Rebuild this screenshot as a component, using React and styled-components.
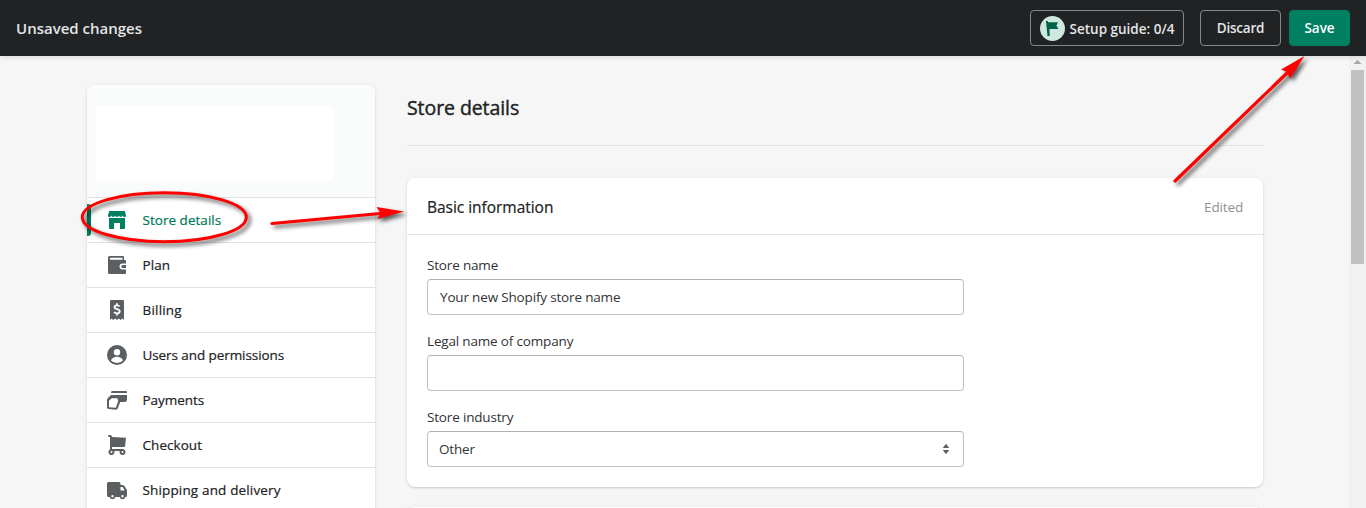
import React from "react";
import styled, { createGlobalStyle } from "styled-components";

const GlobalStyle = createGlobalStyle`
  * { box-sizing: border-box; }
  body {
    margin: 0;
    overflow: hidden;
    background: #f6f6f6;
    color: #202223;
    font-family: "Open Sans", "Noto Sans", sans-serif;
    font-size: 14px;
    line-height: 20px;
  }
`;

const Page = styled.div`
  position: relative;
  display: flex;
  flex-direction: column;
  height: 508px;
  overflow: hidden;
`;

const TopBar = styled.header`
  display: flex;
  align-items: center;
  flex: none;
  height: 56px;
  padding: 0 16px;
  background: #202223;
  box-shadow: 0 2px 4px rgba(0, 0, 0, 0.1);
  z-index: 1;
`;

const BarTitle = styled.div`
  flex: 1;
  color: #e3e5e7;
  font-size: 15px;
  font-weight: 600;
`;

const BarButton = styled.button`
  display: flex;
  align-items: center;
  justify-content: center;
  gap: 5px;
  width: ${(p) => p.$width}px;
  height: 36px;
  margin: 0 0 0 ${(p) => p.$gap || 0}px;
  padding: 0;
  border: 1px solid ${(p) => (p.$primary ? "#008060" : "#84878a")};
  border-radius: 4px;
  background: ${(p) => (p.$primary ? "#008060" : "transparent")};
  color: ${(p) => (p.$primary ? "#fff" : "#e3e5e7")};
  font: 600 13.5px/20px "Open Sans", "Noto Sans", sans-serif;
  letter-spacing: ${(p) => p.$track || 0}px;
  white-space: nowrap;
`;

const ButtonText = styled.span`
  padding-top: ${(p) => p.$drop || 0}px;
`;

const Body = styled.div`
  display: flex;
  flex: 1;
  min-height: 0;
`;

const Content = styled.main`
  display: flex;
  align-items: flex-start;
  gap: 32px;
  flex: 1;
  padding: 29px 0 0 87px;
`;

const Panel = styled.section`
  background: #fff;
  border-radius: 8px;
  box-shadow: 0 0 5px rgba(23, 24, 24, 0.05), 0 1px 2px rgba(0, 0, 0, 0.15);
`;

const Sidebar = styled(Panel)`
  width: 288px;
  padding-bottom: 16px;
  overflow: hidden;
`;

const Account = styled.div`
  height: 112px;
  padding: 21px 9px;
  background: #fafcfb;
`;

const AccountBlank = styled.div`
  width: 237px;
  height: 74px;
  background: #fff;
`;

const NavItem = styled.a`
  position: relative;
  display: flex;
  align-items: center;
  gap: 15.5px;
  height: 45px;
  padding-left: 20px;
  border-top: 1px solid #e1e3e5;
  color: ${(p) => (p.$active ? "#007a5c" : "#202223")};
  font-size: 13.5px;
  font-weight: 500;
  letter-spacing: ${(p) => p.$track}px;
  -webkit-text-stroke: 0.2px currentColor;
  svg {
    fill: ${(p) => (p.$active ? "#008060" : "#5c5f62")};
    -webkit-text-stroke: 0;
  }
`;

const ActiveMark = styled.span`
  position: absolute;
  left: 0;
  top: 6px;
  width: 4px;
  height: 32px;
  border-radius: 0 3px 3px 0;
  background: #008060;
`;

const Column = styled.div`
  display: flex;
  flex-direction: column;
  width: 856px;
`;

const PageTitle = styled.h1`
  height: 61px;
  margin: 0 0 32px;
  padding-top: 9px;
  border-bottom: 1px solid #e1e3e5;
  font-size: 19.5px;
  font-weight: 500;
  line-height: 28px;
  letter-spacing: -0.08px;
  -webkit-text-stroke: 0.4px currentColor;
`;

const Card = styled(Panel)`
  height: 309px;
  margin-bottom: 20px;
  flex: none;
`;

const CardHeader = styled.div`
  display: flex;
  align-items: center;
  justify-content: space-between;
  height: 57px;
  padding: 1px 20px 0;
  border-bottom: 1px solid #e1e3e5;
`;

const CardTitle = styled.h2`
  margin: 0;
  font-size: 15.5px;
  font-weight: 500;
  line-height: 20px;
  letter-spacing: -0.03px;
  -webkit-text-stroke: 0.2px currentColor;
`;

const Badge = styled.span`
  color: #8c9196;
  font-size: 13.5px;
  letter-spacing: -0.15px;
`;

const Form = styled.div`
  display: flex;
  flex-direction: column;
  gap: 16px;
  width: 577px;
  padding: 20px 20px 0;
  font-size: 13.5px;
  letter-spacing: -0.17px;
`;

const Field = styled.label`
  display: flex;
  flex-direction: column;
  gap: 4px;
  color: #303335;
`;

const Control = styled.div`
  display: flex;
  align-items: center;
  justify-content: space-between;
  height: 36px;
  padding: 0 12px 0 ${(p) => p.$inset || 12}px;
  border: 1px solid #c0c4c8;
  border-top-color: #aeb2b6;
  border-radius: 4px;
  background: #fff;
`;

const NextCard = styled(Panel)`
  height: 60px;
`;

const ScrollTrack = styled.div`
  display: flex;
  flex-direction: column;
  align-items: center;
  width: 17px;
  background: #f1f1f1;
`;

const ScrollThumb = styled.div`
  width: 13px;
  height: 194px;
  background: #c1c1c1;
`;

const Markup = styled.svg`
  position: absolute;
  inset: 0;
  z-index: 2;
  pointer-events: none;
  filter: drop-shadow(3px 3px 2px rgba(0, 0, 0, 0.65));
`;

const icons = {
  store: (
    <>
      <path d="M2.200 1h15.600l1.200 4.400c0 1-.7 1.600-1.600 1.600s-1.700-.6-1.700-1.400c0 .8-.9 1.400-1.900 1.400S12 6.400 12 5.600C12 6.400 11 7 10 7S8 6.400 8 5.600C8 6.400 7.200 7 6.200 7S4.300 6.400 4.300 5.600C4.300 6.400 3.500 7 2.600 7S1 6.400 1 5.400z" />
      <path d="M2 8h16v10a1 1 0 0 1-1 1h-4v-6H7v6H3a1 1 0 0 1-1-1z" />
    </>
  ),
  plan: (
    <path
      fillRule="evenodd"
      d="M2.500 1H16a1 1 0 0 1 1 1v3h1a1 1 0 0 1 1 1v2.500h-3.500a3 3 0 0 0 0 6H19V18a1 1 0 0 1-1 1H2.500A1.500 1.500 0 0 1 1 17.500v-15A1.500 1.500 0 0 1 2.500 1zM3.700 2.700a1 1 0 0 0 0 2H15.500v-2zM15.800 10H19v3h-3.200a1.500 1.500 0 0 1 0-3z"
    />
  ),
  billing: (
    <>
      <path d="M3 1a1 1 0 0 1 1-1h12a1 1 0 0 1 1 1v19l-1.500-1.500L13.700 20l-1.900-1.500L10 20l-1.800-1.500L6.300 20l-1.800-1.500L3 20z" />
      <path
        d="M12.600 6.600C12 5.700 11.200 5.300 10 5.300c-1.500 0-2.500.7-2.500 1.900 0 2.700 5.200 1.200 5.200 4.100 0 1.300-1.100 2.100-2.700 2.100-1.300 0-2.300-.5-2.800-1.500M10 3.300v2M10 13.400v2"
        style={{ fill: "none" }}
        stroke="#fff"
        strokeWidth="1.800"
      />
    </>
  ),
  users: (
    <path
      fillRule="evenodd"
      d="M10 0a10 10 0 1 0 0 20 10 10 0 0 0 0-20zm0 4a3.200 3.200 0 1 1 0 6.400A3.200 3.200 0 0 1 10 4zm0 14a8 8 0 0 1-6.100-2.800C5.100 13 7.400 11.800 10 11.800s4.900 1.200 6.100 3.400A8 8 0 0 1 10 18z"
    />
  ),
  payments: (
    <>
      <path d="M5.500 1H19a1 1 0 0 1 1 1v1H4v-.5C4 1.600 4.600 1 5.500 1z" />
      <path
        fillRule="evenodd"
        d="M4 5h16v4.500c0 1.500-.9 2.500-2.400 2.500h-4.400l-2.500 6.600c-.3.800-1 1.200-1.800 1.100l-7.200-.6C.7 19 0 18.300 0 17.300V10c0-.8.3-1.500.9-2zM4.800 8.200 2.400 10.200c-.3.200-.4.500-.4.800v6.200l6.800.6L11.200 11l-.9-2.800z"
      />
    </>
  ),
  checkout: (
    <path
      fillRule="evenodd"
      d="M1 1a1 1 0 0 1 1-1h1a2 2 0 0 1 2 2l14 .8-.9 8.400a1 1 0 0 1-1 .8H5v2h10.500a3 3 0 1 1-2.800 2H7.300A3 3 0 1 1 3 14.400V2H2a1 1 0 0 1-1-1zm3.500 15a1 1 0 1 0 0 2 1 1 0 0 0 0-2zm11 0a1 1 0 1 0 0 2 1 1 0 0 0 0-2z"
    />
  ),
  shipping: (
    <path
      fillRule="evenodd"
      d="M1.500 2H12a1.500 1.500 0 0 1 1.500 1.500V5h2c.8 0 1.500.4 1.900 1l2.200 3.600c.3.400.4.900.4 1.400v4.500a1.500 1.500 0 0 1-1.500 1.500h-.1a3 3 0 0 1-5.800 0H8.400a3 3 0 0 1-5.800 0H1.500A1.500 1.500 0 0 1 0 15.500v-12A1.500 1.500 0 0 1 1.500 2zm12 5v3.500h4.200L15.600 7zM5.500 15a1.200 1.200 0 1 0 0 2.400 1.200 1.200 0 0 0 0-2.400zm10 0a1.200 1.200 0 1 0 0 2.400 1.200 1.200 0 0 0 0-2.400z"
    />
  ),
};

const navigation = [
  ["store", "Store details", 0.03],
  ["plan", "Plan", 0.05],
  ["billing", "Billing", 0.2],
  ["users", "Users and permissions", -0.08],
  ["payments", "Payments", -0.03],
  ["checkout", "Checkout", 0.05],
  ["shipping", "Shipping and delivery", 0.15],
];

export default function App() {
  return (
    <Page>
      <GlobalStyle />
      <TopBar>
        <BarTitle>Unsaved changes</BarTitle>
        <BarButton $width={154}>
          <svg width="25" height="25" viewBox="0 0 25 25">
            <circle cx="12.500" cy="12.500" r="12.500" fill="#cfe8df" />
            <path d="M6 5h1.800l.3 1.200H18l-1.600 3.300 2 3.500h-9L9.800 20H7.500z" fill="#006048" />
          </svg>
          <ButtonText $drop={2}>Setup guide: 0/4</ButtonText>
        </BarButton>
        <BarButton $width={81} $gap={16} $track={-0.2}>Discard</BarButton>
        <BarButton $width={61} $gap={8} $primary>Save</BarButton>
      </TopBar>
      <Body>
        <Content>
          <Sidebar as="nav">
            <Account>
              <AccountBlank />
            </Account>
            {navigation.map(([icon, label, track], i) => (
              <NavItem key={label} $active={i === 0} $track={track}>
                {i === 0 && <ActiveMark />}
                <svg width="20" height="20" viewBox="0 0 20 20">{icons[icon]}</svg>
                <span>{label}</span>
              </NavItem>
            ))}
          </Sidebar>
          <Column>
            <PageTitle>Store details</PageTitle>
            <Card>
              <CardHeader>
                <CardTitle>Basic information</CardTitle>
                <Badge>Edited</Badge>
              </CardHeader>
              <Form>
                <Field>
                  <span>Store name</span>
                  <Control>Your new Shopify store name</Control>
                </Field>
                <Field>
                  <span>Legal name of company</span>
                  <Control />
                </Field>
                <Field>
                  <span>Store industry</span>
                  <Control $inset={11}>
                    <span>Other</span>
                    <svg width="10" height="10" viewBox="0 0 10 10" fill="#5c5f62">
                      <path d="M1.800 4h6.400L5.600.4a.8.8 0 0 0-1.200 0zM1.800 6h6.400L5.600 9.600a.8.8 0 0 1-1.200 0z" />
                    </svg>
                  </Control>
                </Field>
              </Form>
            </Card>
            <NextCard />
          </Column>
        </Content>
        <ScrollTrack>
          <svg width="17" height="14" viewBox="0 0 17 14">
            <path d="M4.500 8 8.500 4l4 4z" fill="#a3a3a3" />
          </svg>
          <ScrollThumb />
        </ScrollTrack>
      </Body>
      <Markup width="1366" height="508" viewBox="0 0 1366 508">
        <ellipse cx="164.300" cy="217.200" rx="82" ry="24.500" fill="none" stroke="#f00" strokeWidth="3" />
        <path d="M272 223.500 380 213.500M1175 181l112-108" stroke="#f00" strokeWidth="3.200" strokeLinecap="round" />
        <path d="M404 211.500 376.500 207l4 6-3 6z" fill="#f00" />
        <path d="M1304.500 56l-23.500 13.500 6 2.500 3 6.500z" fill="#f00" />
      </Markup>
    </Page>
  );
}
